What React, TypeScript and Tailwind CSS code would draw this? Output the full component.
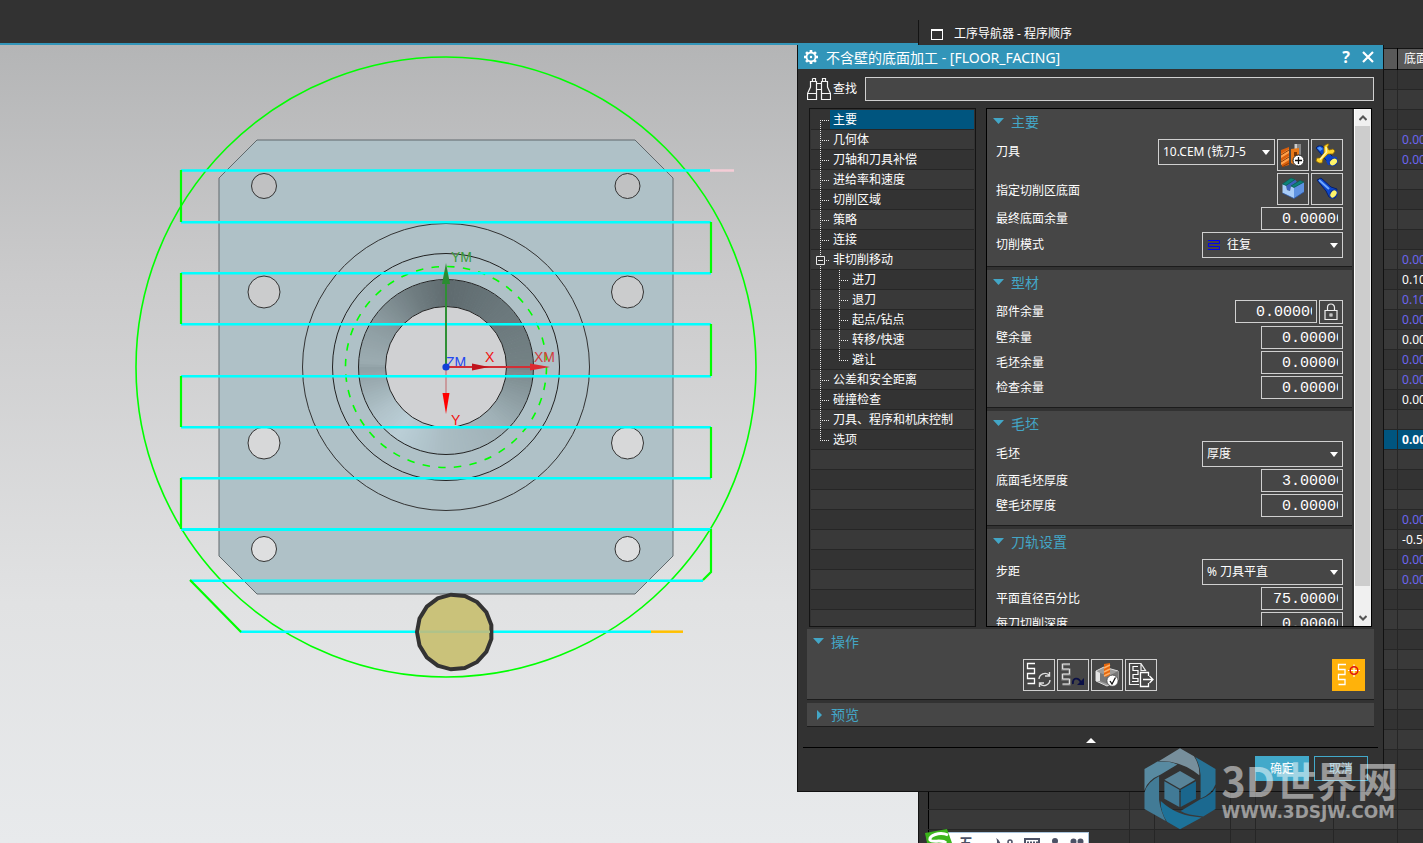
import { useState } from "react";
import type { ReactNode } from "react";
import clsx from "clsx";

type NavCell = { text: string; tone: "link" | "plain" | "active" };

const navCells: Record<number, NavCell> = {
  3: { text: "0.0000", tone: "link" },
  4: { text: "0.0000", tone: "link" },
  9: { text: "0.0000", tone: "link" },
  10: { text: "0.1000", tone: "plain" },
  11: { text: "0.1000", tone: "link" },
  12: { text: "0.0000", tone: "link" },
  13: { text: "0.0000", tone: "plain" },
  14: { text: "0.0000", tone: "link" },
  15: { text: "0.0000", tone: "link" },
  16: { text: "0.0000", tone: "plain" },
  18: { text: "0.0000", tone: "active" },
  22: { text: "0.0000", tone: "link" },
  23: { text: "-0.5000", tone: "plain" },
  24: { text: "0.0000", tone: "link" },
  25: { text: "0.0000", tone: "link" },
};

const treeItems = [
  { label: "主要" },
  { label: "几何体" },
  { label: "刀轴和刀具补偿" },
  { label: "进给率和速度" },
  { label: "切削区域" },
  { label: "策略" },
  { label: "连接" },
  { label: "非切削移动", parent: true },
  { label: "进刀", child: true },
  { label: "退刀", child: true },
  { label: "起点/钻点", child: true },
  { label: "转移/快速", child: true },
  { label: "避让", child: true, lastChild: true },
  { label: "公差和安全距离" },
  { label: "碰撞检查" },
  { label: "刀具、程序和机床控制" },
  { label: "选项" },
];

/* ---------- graphics window ---------- */

const CX = 446;
const CY = 367;

const coneStops: [number, number[]][] = [
  [0, [95, 107, 111]],
  [45, [107, 120, 124]],
  [90, [116, 130, 133]],
  [92, [124, 139, 143]],
  [135, [160, 177, 183]],
  [180, [170, 188, 195]],
  [215, [186, 207, 215]],
  [235, [176, 194, 201]],
  [268, [144, 160, 165]],
  [273, [156, 172, 177]],
  [305, [138, 153, 158]],
  [335, [112, 125, 129]],
  [361, [95, 107, 111]],
];

const coneColor = (deg: number) => {
  const i = coneStops.findIndex(([a]) => a > deg);
  const [a0, c0] = coneStops[i - 1];
  const [a1, c1] = coneStops[i];
  const t = (deg - a0) / (a1 - a0);
  return `rgb(${c0.map((c, k) => Math.round(c + (c1[k] - c) * t)).join(",")})`;
};

const polar = (cx: number, cy: number, r: number, deg: number) => {
  const a = ((deg - 90) * Math.PI) / 180;
  return `${(cx + r * Math.cos(a)).toFixed(2)} ${(cy + r * Math.sin(a)).toFixed(2)}`;
};

const wedges = Array.from({ length: 180 }, (_, i) => i * 2);
const cutter = Array.from({ length: 17 }, (_, i) => polar(454.5, 632, 37.5, 270 + (i * 360) / 17)).join(" ");
const passes = [222, 273, 324, 376, 427, 478];
const holes = [
  [186, 12.5],
  [292, 16],
  [443, 16],
  [549, 12.5],
];

const Scene = () => (
  <svg className="block h-full w-full" role="img" aria-label="刀轨">
    <defs>
      <linearGradient id="sky" x1="0" y1="0" x2="0" y2="1">
        <stop offset="0" stopColor="#b4b5b6" />
        <stop offset="0.3" stopColor="#cbcbcc" />
        <stop offset="0.7" stopColor="#e1e2e3" />
        <stop offset="1" stopColor="#e8eaec" />
      </linearGradient>
    </defs>
    <rect width="100%" height="100%" fill="url(#sky)" />
    <g transform="translate(0 -45)" fill="none">
      <path d="M257 140H635L673 178V556L635 594H257L219 556V178Z" fill="#afc1c7" stroke="#60696c" />
      {holes.map(([y, r]) =>
        [264, 627.5].map((x) => (
          <circle key={`${x}-${y}`} cx={x} cy={y} r={r} fill={y < 200 ? "#c0c1c2" : y < 300 ? "#cbcccd" : y < 500 ? "#d7d8d9" : "#dedfe0"} stroke="#333" />
        ))
      )}
      {wedges.map((d) => (
        <path key={d} d={`M${polar(CX, CY, 73.5, d)}A73.5 73.5 0 0 1 ${polar(CX, CY, 73.5, d + 2.5)}`} stroke={coneColor(d)} strokeWidth="27" />
      ))}
      <circle cx={CX} cy={CY} r="60.5" fill="#d0d1d3" stroke="#222" />
      <circle cx={CX} cy={CY} r="87.5" stroke="#222" />
      <circle cx={CX} cy={CY} r="113.5" stroke="#222" />
      <circle cx={CX} cy={CY} r="143.5" stroke="#333" />
      <circle cx={CX} cy={CY} r="100.5" stroke="#0f0" strokeWidth="1.6" strokeDasharray="7.5 8.3" />
      <circle cx={CX} cy={CY} r="310" stroke="#0f0" strokeWidth="1.6" />

      {/* tool path */}
      <path d="M446 367V394" stroke="#c99a9d" strokeWidth="2" />
      <g stroke="#0ff" strokeWidth="2.500">
        <path d="M181 170.500H710" />
        {passes.map((y) => (
          <path key={y} d={`M181 ${y}.300H711`} />
        ))}
        <path d="M181 529.500H711" strokeWidth="3" />
        <path d="M190 580.700H703M240 631.700H651" />
      </g>
      <path d="M710 170.500H734" stroke="#f5ccd6" strokeWidth="2.500" />
      <path d="M651 631.700H683" stroke="#ffc000" strokeWidth="2.500" />
      <path d="M181 170V222M711 222V273M181 273V324M711 324V376M181 376V427M711 427V478M181 478V529M711 529V572L703 580M190 580L241 632" stroke="#0f0" strokeWidth="2.200" />
      <polygon points={cutter} fill="#cac27a" stroke="#333" strokeWidth="4" />
      <path d="M419 631.700H490" stroke="#b0c289" strokeWidth="2.500" />

      {/* triad */}
      <g className="font-['Liberation_Sans'] text-[14px]">
        <text x="451" y="262" fill="#3a9a3a">YM</text>
        <text x="485" y="362" fill="#f01010">X</text>
        <text x="534" y="362" fill="#d23c3c">XM</text>
        <text x="446" y="367" fill="#2347f0">ZM</text>
        <text x="451" y="425" fill="#f01010">Y</text>
      </g>
      <path d="M442.500 393H449.500L446 414Z" fill="#f00" />
      <path d="M446 367V282" stroke="#2f8f35" strokeWidth="2" />
      <path d="M442 284L446 263L450 284Z" fill="#2b8c31" />
      <path d="M446 367H532" stroke="#d22e35" strokeWidth="2" />
      <path d="M472 363.500L489 367L472 370.500Z" fill="#c0141c" />
      <path d="M530 363.500L550 367L530 370.500Z" fill="#dd2b30" />
      <circle cx="446" cy="367" r="3.600" fill="#1140d8" />
    </g>
  </svg>
);

/* ---------- icons ---------- */

const Icon = ({ children }: { children: ReactNode }) => (
  <svg viewBox="1 1 30 30" className="block h-[30px] w-[30px]" fill="none" aria-hidden="true">
    {children}
  </svg>
);

const Drill = () => (
  <>
    <path d="M4 11L12 8V26L5 28L4 20Z" fill="#d95f0c" />
    <path d="M4 15L12 10V14L4 19ZM4 22L12 17V21L4 26Z" fill="#ffa04a" />
    <path d="M4 16L12 11M4 23L12 18M5 28L12 24" stroke="#8c3a05" />
  </>
);

const NewToolIcon = () => (
  <Icon>
    <Drill />
    <path d="M17 5H24V16H17Z" fill="#888" />
    <path d="M18 5H20V16H18Z" fill="#ccc" />
    <path d="M14 10L22 9V18L18 20V26L14 24Z" fill="#e87817" />
    <path d="M17 13H20V17H17Z" fill="#7a3503" />
    <circle cx="21.500" cy="21.500" r="5.500" fill="#fff" stroke="#222" />
    <path d="M21.500 18V25M18 21.500H25" stroke="#111" strokeWidth="1.300" />
  </Icon>
);

const EditToolIcon = () => (
  <Icon>
    <path d="M5 9L7 7L11 7L22 18L19 25L15 21Z" fill="#0b46c8" stroke="#06206d" />
    <path d="M6 9L9 7.500L12 10L9 12Z" fill="#4f97ff" />
    <path d="M19 17L26 18L24 26L17 26L15 22Z" fill="#0d42c4" />
    <ellipse cx="22.500" cy="23" rx="4.500" ry="3.300" transform="rotate(-40 22.500 23)" fill="#fdf36a" stroke="#0a2f9a" />
    <path d="M13 7L16 5L18 5L16.500 8L18 11L22 10L24 12L22 15L17 15L12 20L11 24L8 24L5 22L6 19L9 19L13 14Z" fill="#ffd42a" stroke="#8b6400" strokeWidth=".8" />
    <path d="M15 8L15.500 13L9 20.500" stroke="#fff6ad" strokeWidth="1.500" />
  </Icon>
);

const FloorIcon = () => (
  <Icon>
    <path d="M9 12.500L18 6.500L20 9L14 13L13 18L10 17Z" fill="#3c62bd" />
    <path d="M5.500 11V20L17 25.500V14.500L14 13L13 18L10 17L9 12.500Z" fill="#a9cdf8" />
    <path d="M17 14.500L27 9V19L17 25.500Z" fill="#5f93e2" />
    <path d="M5.500 11L14 5L18 6.500L9 12.500ZM14 13L23 7.500L27 9L17 14.500Z" fill="#0c8279" stroke="#055a53" strokeWidth=".6" />
    <path d="M5.500 20L17 25.500L27 19" stroke="#2b55a5" strokeWidth=".8" />
  </Icon>
);

const TorchIcon = () => (
  <Icon>
    <path d="M6 7L10 5L20 14L26 16L24 25L18 24L15 18Z" fill="#0c46cc" stroke="#061f6b" />
    <path d="M8 7L18 16" stroke="#6fa8ff" strokeWidth="2" />
    <ellipse cx="22.500" cy="21" rx="4.500" ry="3.300" transform="rotate(-55 22.500 21)" fill="#fdf36a" stroke="#0a2f9a" strokeWidth="1.200" />
  </Icon>
);

const serpentine = "M12 4.500H4.500V9.500H11.500V14.500H4.500V19.500H11.500V24.500H4.500";

const GenerateIcon = () => (
  <Icon>
    <path d={serpentine} stroke="#fff" strokeWidth="1.300" />
    <path d="M16 20A6 6 0 0 1 26 16M27 21A6 6 0 0 1 17 25M26.500 13V17H22M16.500 28V24H21" stroke="#ddd" strokeWidth="1.400" />
  </Icon>
);

const ReplayIcon = () => (
  <Icon>
    <path d={serpentine} transform="translate(1 1)" stroke="#8a8a8a" strokeWidth="2.200" />
    <path d={serpentine} transform="translate(1 .5)" stroke="#ddd" />
    <path d="M16 25C15 18 22 18 24 24" stroke="#0a0f45" strokeWidth="1.800" />
    <path d="M27 19V26H20Z" fill="#0a0f45" />
  </Icon>
);

const VerifyIcon = () => (
  <Icon>
    <path d="M5 12L13 8L27 12V21L16 27L5 22Z" fill="#9b9b9b" stroke="#ddd" />
    <path d="M5 12L9 14V22L5 22Z" fill="#e5e5e5" />
    <path d="M9 14L18 17L27 12V20L17 25L9 22Z" fill="#777" />
    <path d="M13 5L19 4V16L15 18L13 16Z" fill="#e5670e" />
    <path d="M13 9L19 6M13 13L19 10M13 17L19 14" stroke="#ffb066" strokeWidth="1.500" />
    <circle cx="21.500" cy="21.700" r="5.600" fill="#fff" stroke="#444" strokeWidth=".8" />
    <path d="M19 22L21 25L24.500 18.500" stroke="#111" strokeWidth="1.300" />
  </Icon>
);

const PostIcon = () => (
  <Icon>
    <path d="M14 25.500H4.500V4.500H16L20.500 11.500H16V5" stroke="#eee" strokeWidth="1.200" />
    <path d="M13 7.500H8V11.500H13V15.500H8V19.500H13V22.500H7" stroke="#fff" strokeWidth="1.200" />
    <path d="M23.500 17V13.500H15.500V27.500H23.500V24M18 20.500H27.500M24.500 17L28 20.500L24.500 24" stroke="#fff" strokeWidth="1.300" />
  </Icon>
);

const ShowPathIcon = () => (
  <Icon>
    <path d="M14 5.500H6.500V10.500H13V15.500H6.500V20.500H13V25.500H6.500" stroke="#fff" strokeWidth="1.300" />
    <path d="M22 5.500V18M16 11.500H28" stroke="#fff" strokeWidth="1.200" />
    <circle cx="22" cy="11.500" r="3.800" stroke="#e01010" strokeWidth="1.500" />
  </Icon>
);

const LockIcon = () => (
  <svg viewBox="0 0 22 22" className="block h-[22px] w-[22px]" fill="none" aria-hidden="true">
    <path d="M5 9.500H17V18.500H5ZM7.500 9V6.500A3.500 3.500 0 0 1 14.500 6.500V9" stroke="#eee" strokeWidth="1.200" />
    <rect x="10" y="13" width="2" height="2" stroke="#eee" />
  </svg>
);

const Binoculars = () => (
  <svg viewBox="0 0 24 24" className="h-6 w-6" fill="none" stroke="#f4f4f4" strokeWidth="1.200" aria-hidden="true">
    <path d="M5.500 1.500H8.500V4.500M5.500 1.500V4.500H3.500V10L.500 16.500V22.500H9.500V16.500H.500M9.500 16.500V4.500H5.500M9.500 6.500H14.500M9.500 12.500H14.500M14.500 16.500V4.500H18.500M15.500 4.500V1.500H18.500V4.500H20.500V10L23.500 16.500V22.500H14.500V16.500H23.500" />
  </svg>
);

const Gear = () => (
  <svg viewBox="0 0 16 16" className="h-4 w-4" aria-hidden="true">
    <g fill="#fff">
      {[0, 45, 90, 135, 180, 225, 270, 315].map((a) => (
        <rect key={a} x="6.700" y="1" width="2.600" height="3" transform={`rotate(${a} 8 8)`} />
      ))}
    </g>
    <circle cx="8" cy="8" r="4.500" fill="none" stroke="#fff" strokeWidth="1.800" />
    <circle cx="8" cy="8" r="1.200" fill="#fff" />
  </svg>
);

/* ---------- controls ---------- */

const IconButton = ({ label, children }: { label: string; children: ReactNode }) => (
  <button type="button" aria-label={label} className="h-8 w-8 shrink-0 border border-[#d0d0d0]">
    {children}
  </button>
);

const Caret = () => (
  <svg viewBox="0 0 8 5" className="pointer-events-none absolute top-1/2 right-[5px] -mt-0.5 h-[5px] w-2" aria-hidden="true">
    <path d="M0 0H8L4 5Z" fill="#fff" />
  </svg>
);

type SelectProps = { id: string; value: string; wide?: boolean; icon?: boolean };

const Select = ({ id, value, wide = true, icon }: SelectProps) => (
  <div className={clsx("relative h-[26px]", wide ? "w-[141px]" : "w-[117px]")}>
    <select
      id={id}
      className={clsx("h-full w-full appearance-none border border-[#d0d0d0] bg-[#464646] pr-4 text-white outline-none", icon ? "pl-6" : "pl-1")}
    >
      <option>{value}</option>
    </select>
    {icon && (
      <svg viewBox="0 0 12 10" className="pointer-events-none absolute top-2 left-1.5 h-2.5 w-3" aria-hidden="true">
        <path d="M0 .500H11.500V3.500H.500V6.500H11.500V9.500H0" fill="none" stroke="#0000f0" />
      </svg>
    )}
    <Caret />
  </div>
);

const NumberBox = ({ id, value }: { id: string; value: string }) => (
  <input
    id={id}
    defaultValue={value}
    className={clsx(
      "h-[23px] w-[82px] border border-[#d0d0d0] bg-transparent pt-0.5 pr-1 font-['Liberation_Mono',monospace] text-[15px] text-white outline-none",
      value.length > 7 ? "pl-[11px]" : "pl-5"
    )}
  />
);

const Row = ({ id, label, tall, children }: { id: string; label: string; tall?: boolean; children: ReactNode }) => (
  <div className="flex items-start justify-between">
    <label htmlFor={id} className={tall ? "leading-[26px]" : "leading-[23px]"}>
      {label}
    </label>
    <div className="flex gap-0.5">{children}</div>
  </div>
);

const Group = ({ title, children }: { title: string; children: ReactNode }) => (
  <section className="mb-[3px] border-b border-[#1c1c1c] bg-[#464646] pr-[9px] pb-2 pl-[9px]">
    <h2 className="-ml-[3px] flex h-[30px] items-center gap-[7px] pb-1.5 text-[14px] text-[#43a6c6]">
      <svg viewBox="0 0 11 6" className="h-1.5 w-[11px]" aria-hidden="true">
        <path d="M0 0H11L5.500 6Z" fill="#43a6c6" />
      </svg>
      {title}
    </h2>
    <div className="flex flex-col gap-0.5">{children}</div>
  </section>
);

type Item = (typeof treeItems)[number];

const TreeLines = ({ item, first, last }: { item: Item; first: boolean; last: boolean }) => (
  <svg className={clsx("h-5 shrink-0", item.child ? "w-[38px]" : "w-[19px]")} fill="none" stroke="#e8e8e8" strokeDasharray="1 1" aria-hidden="true">
    <path d={first ? "M9.500 10V20" : last ? "M9.500 0V10" : "M9.500 0V20"} />
    {item.child ? (
      <path d={item.lastChild ? "M28.500 0V10M28 10.500H38" : "M28.500 0V20M28 10.500H38"} />
    ) : (
      <path d="M9 10.500H19" />
    )}
    {item.parent && <path d="M5.500 6.500H13.500V14.500H5.500ZM7 10.500H12" fill="#343434" strokeDasharray="none" />}
  </svg>
);

const Tree = () => {
  const [active, setActive] = useState(0);
  return (
    <ul className="w-[167px] shrink-0 overflow-hidden border border-[#141414] px-px pt-px">
      {Array.from({ length: 26 }, (_, i) => {
        const item = treeItems[i];
        return (
          <li key={i} className={clsx("flex h-5 border-b border-[#262626]", i % 2 ? "bg-[#393939]" : "bg-[#333333]")}>
            {item && (
              <>
                <TreeLines item={item} first={i === 0} last={i === treeItems.length - 1} />
                <button
                  type="button"
                  onClick={() => setActive(i)}
                  className={clsx("flex-1 pl-[3px] text-left leading-[19px] whitespace-nowrap", i === active && "bg-[#00557f]")}
                >
                  {item.label}
                </button>
              </>
            )}
          </li>
        );
      })}
    </ul>
  );
};

const OperationDialog = () => (
  <div
    role="dialog"
    aria-label="不含壁的底面加工"
    className="absolute top-[45px] right-[39px] flex h-[747px] w-[587px] flex-col border-x border-b border-[#111] bg-[#323232]"
  >
    <div className="flex h-6 shrink-0 items-center bg-[#3295b9] pr-[9px] pl-[5px] text-[14px]">
      <Gear />
      <h1 className="ml-[7px] flex-1 font-['Noto_Sans','Noto_Sans_CJK_SC',sans-serif]">不含壁的底面加工 - [FLOOR_FACING]</h1>
      <button type="button" aria-label="帮助" className="w-5 text-[16px] font-bold">
        ?
      </button>
      <button type="button" aria-label="关闭" className="ml-1.5 h-3 w-3">
        <svg viewBox="0 0 12 12" className="h-3 w-3">
          <path d="M1 1L11 11M11 1L1 11" stroke="#fff" strokeWidth="2.200" />
        </svg>
      </button>
    </div>

    <div className="flex h-[39px] shrink-0 items-center pr-[9px] pl-[9px]">
      <Binoculars />
      <label htmlFor="find" className="ml-0.5">
        查找
      </label>
      <input id="find" className="ml-2 h-6 flex-1 border border-[#d0d0d0] bg-[#464646] px-1 outline-none" />
    </div>

    <div className="flex h-[519px] shrink-0 gap-2.5 pr-[11px] pl-[11px]">
      <Tree />
      <div className="flex flex-1 border border-black">
        <div className="flex-1 overflow-hidden">
          <Group title="主要">
            <Row id="tool" label="刀具" tall>
              <Select id="tool" value="10.CEM (铣刀-5" wide={false} />
              <IconButton label="新建刀具">
                <NewToolIcon />
              </IconButton>
              <IconButton label="编辑刀具">
                <EditToolIcon />
              </IconButton>
            </Row>
            <div className="flex items-end justify-between">
              <span className="leading-7">指定切削区底面</span>
              <div className="flex gap-0.5">
                <IconButton label="指定底面">
                  <FloorIcon />
                </IconButton>
                <IconButton label="显示">
                  <TorchIcon />
                </IconButton>
              </div>
            </div>
            <Row id="final" label="最终底面余量">
              <NumberBox id="final" value="0.00000" />
            </Row>
            <Row id="mode" label="切削模式" tall>
              <Select id="mode" value="往复" icon />
            </Row>
          </Group>
          <Group title="型材">
            <Row id="part" label="部件余量">
              <NumberBox id="part" value="0.00000" />
              <button type="button" aria-label="锁定" className="h-6 w-6 border border-[#d0d0d0]">
                <LockIcon />
              </button>
            </Row>
            <Row id="wall" label="壁余量">
              <NumberBox id="wall" value="0.00000" />
            </Row>
            <Row id="blankstock" label="毛坯余量">
              <NumberBox id="blankstock" value="0.00000" />
            </Row>
            <Row id="check" label="检查余量">
              <NumberBox id="check" value="0.00000" />
            </Row>
          </Group>
          <Group title="毛坯">
            <Row id="blank" label="毛坯" tall>
              <Select id="blank" value="厚度" />
            </Row>
            <Row id="floorblank" label="底面毛坯厚度">
              <NumberBox id="floorblank" value="3.00000" />
            </Row>
            <Row id="wallblank" label="壁毛坯厚度">
              <NumberBox id="wallblank" value="0.00000" />
            </Row>
          </Group>
          <Group title="刀轨设置">
            <Row id="step" label="步距" tall>
              <Select id="step" value="% 刀具平直" />
            </Row>
            <Row id="percent" label="平面直径百分比">
              <NumberBox id="percent" value="75.00000" />
            </Row>
            <Row id="depth" label="每刀切削深度">
              <NumberBox id="depth" value="0.00000" />
            </Row>
          </Group>
        </div>
        <div className="ml-0.5 flex w-[17px] flex-col border-l border-white bg-[#f0f0f0]">
          <button type="button" aria-label="向上滚动" className="flex h-[17px] items-center justify-center">
            <svg viewBox="0 0 8 6" className="h-1.5 w-2">
              <path d="M.500 5L4 1.500L7.500 5" fill="none" stroke="#555" strokeWidth="2" />
            </svg>
          </button>
          <div className="mr-px flex-1 bg-[#cdcdcd]" />
          <button type="button" aria-label="向下滚动" className="flex h-10 items-end justify-center pb-[5px]">
            <svg viewBox="0 0 8 6" className="h-1.5 w-2">
              <path d="M.500 1L4 4.500L7.500 1" fill="none" stroke="#555" strokeWidth="2" />
            </svg>
          </button>
        </div>
      </div>
    </div>

    <div className="mt-0.5 flex flex-col gap-[3px] pr-[9px] pl-[9px] text-[14px] text-[#43a6c6]">
      <section className="h-[71px] border-b border-[#1c1c1c] bg-[#464646] px-1.5">
        <h2 className="flex h-[30px] items-center gap-[7px] pb-1.5">
          <svg viewBox="0 0 11 6" className="h-1.5 w-[11px]" aria-hidden="true">
            <path d="M0 0H11L5.500 6Z" fill="#43a6c6" />
          </svg>
          操作
        </h2>
        <div className="flex items-start">
          <div className="flex flex-1 justify-center gap-0.5 pl-[34px]">
            <IconButton label="生成">
              <GenerateIcon />
            </IconButton>
            <IconButton label="重播">
              <ReplayIcon />
            </IconButton>
            <IconButton label="确认">
              <VerifyIcon />
            </IconButton>
            <IconButton label="后处理">
              <PostIcon />
            </IconButton>
          </div>
          <button type="button" aria-label="显示刀轨" className="mr-[3px] h-8 w-[33px] border border-[#ffb20a] bg-[#ffb20a]">
            <ShowPathIcon />
          </button>
        </div>
      </section>
      <section className="h-6 border-b border-[#1c1c1c] bg-[#464646] px-1.5">
        <h2 className="flex h-full items-center gap-[7px]">
          <svg viewBox="0 0 11 12" className="h-3 w-[11px]" aria-hidden="true">
            <path d="M4 1V11L9 6Z" fill="#43a6c6" />
          </svg>
          预览
        </h2>
      </section>
    </div>

    <div className="mx-[5px] flex h-[21px] shrink-0 items-center justify-center border-b border-black pt-[7px]">
      <svg viewBox="0 0 10 5" className="h-[5px] w-2.5" aria-hidden="true">
        <path d="M0 5H10L5 0Z" fill="#fff" />
      </svg>
    </div>
    <div className="flex gap-[5px] self-end pt-2 pr-[15px]">
      <button type="button" className="h-[25px] w-[54px] bg-[#42a9ca]">
        确定
      </button>
      <button type="button" className="h-[25px] w-[54px] border border-[#42a9ca] text-[#7fbfd6]">
        取消
      </button>
    </div>
  </div>
);

/* ---------- operation navigator ---------- */

const Navigator = () => (
  <aside className="flex w-[505px] shrink-0 flex-col">
    <div className="mt-5 flex h-7 shrink-0 items-center border-l border-[#141414] pl-3">
      <span className="h-[11px] w-3 border border-t-2 border-white" />
      <h2 className="ml-[11px]">工序导航器 - 程序顺序</h2>
    </div>
    <div className="flex-1 overflow-hidden border-l border-[#141414] pl-[9px]">
      <table className="w-full table-fixed border-collapse border-l border-black">
        <colgroup>
          <col className="w-[201px]" />
          <col className="w-[25px]" />
          <col className="w-[76px]" />
          <col className="w-[25px]" />
          <col className="w-[78px]" />
          <col className="w-[64px]" />
          <col />
        </colgroup>
        <thead>
          <tr className="h-[21px] border-y border-[#141414] bg-[#595959]">
            <th colSpan={6} />
            <th className="overflow-hidden border-l border-black p-0 pl-1.5 text-left font-normal whitespace-nowrap">底面余量</th>
          </tr>
        </thead>
        <tbody>
          {Array.from({ length: 39 }, (_, i) => {
            const cell = navCells[i];
            return (
              <tr
                key={i}
                className={clsx(
                  "h-5 border-b border-[#262626]",
                  cell?.tone === "active" ? "bg-[#00557f]" : i % 2 ? "bg-[#393939]" : "bg-[#333333]"
                )}
              >
                {[0, 1, 2, 3, 4, 5].map((c) => (
                  <td key={c} className="border-r border-[#262626] p-0" />
                ))}
                <td
                  className={clsx(
                    "overflow-hidden border-l border-black p-0 pl-1 leading-[19px] whitespace-nowrap",
                    cell?.tone === "link" && "text-[#6c66f0]",
                    cell?.tone === "active" && "font-bold"
                  )}
                >
                  {cell?.text}
                </td>
              </tr>
            );
          })}
        </tbody>
      </table>
    </div>
  </aside>
);

const InputMethodBar = () => (
  <div className="absolute right-[334px] bottom-0 flex h-[11px] w-[164px]">
    <div className="ml-3 flex flex-1 items-start justify-between overflow-hidden border border-b-0 border-[#a9c4dc] bg-white pr-1 pl-[21px] text-[#4c5266]">
      <span className="mt-[3px] text-[14px] leading-[14px] font-bold">五</span>
      <svg viewBox="0 0 12 10" className="mt-[5px] ml-2 h-2.5 w-3" fill="currentColor" aria-hidden="true">
        <path d="M4 0A7 7 0 0 1 1 10H8A8 8 0 0 0 4 0Z" />
      </svg>
      <svg viewBox="0 0 6 6" className="mt-1.5 -ml-2 h-1.5 w-1.5" fill="none" stroke="currentColor" strokeWidth="1.500" aria-hidden="true">
        <circle cx="3" cy="3" r="2" />
      </svg>
      <svg viewBox="0 0 16 10" className="mt-[5px] h-2.5 w-4" fill="none" stroke="currentColor" strokeWidth="2" aria-hidden="true">
        <path d="M1 10V1H15V10" />
        <path d="M3 4.500H14" strokeDasharray="2 1" />
      </svg>
      <svg viewBox="0 0 8 10" className="mt-[5px] h-2.5 w-2" fill="currentColor" aria-hidden="true">
        <circle cx="4" cy="3" r="3" />
        <path d="M0 10Q4 4 8 10Z" />
      </svg>
      <svg viewBox="0 0 14 10" className="mt-[5px] h-2.5 w-3.5" fill="currentColor" aria-hidden="true">
        <circle cx="3.500" cy="3.500" r="3" />
        <circle cx="10.500" cy="3.500" r="3" />
      </svg>
    </div>
    <svg viewBox="0 0 28 14" className="absolute bottom-0 left-0 h-3.5 w-7" aria-hidden="true">
      <path d="M0 4L22 0L27 14H2Z" fill="#3cb51c" />
      <path d="M23 6C14 2 4 7 5 11C7 14 18 10 21 14" fill="none" stroke="#fff" strokeWidth="3" />
    </svg>
  </div>
);

const Watermark = () => (
  <div className="pointer-events-none absolute right-[25px] bottom-[13px] flex items-center gap-1.5">
    <svg viewBox="30 23 216 247" className="h-[82px] w-[72px]" aria-hidden="true">
      <path d="M75 62L138 24L180 48Q198 75 196 105Q140 60 75 62Z" fill="#778f9c" />
      <path d="M184 50L245 86V132Q235 160 200 175V104Q198 75 184 50Z" fill="#277295" />
      <path d="M245 142V207L208 229Q160 226 140 213L198 178Q235 165 245 142Z" fill="#1b6990" />
      <path d="M80 183Q130 230 203 232L138 268L99 245Q78 215 80 183Z" fill="#1d7299" />
      <path d="M75 108V180Q80 215 95 243L31 207V157Q40 125 75 108Z" fill="#427b96" />
      <path d="M31 86L70 64Q110 62 130 73L80 103Q40 120 31 150Z" fill="#588aa1" />
      <path d="M138 92L184 119L138 146L91 119Z" fill="#588398" />
      <path d="M91 123L136 149V201L91 176Z" fill="#417a96" />
      <path d="M140 149L186 123V176L140 201Z" fill="#1a668d" />
    </svg>
    <div className="text-white/50">
      <div className="font-['Noto_Sans_CJK_SC',sans-serif] text-[41px] leading-[46px] font-bold whitespace-nowrap">3D世界网</div>
      <div className="font-['DejaVu_Sans',sans-serif] text-[17px] leading-5 font-bold">WWW.3DSJW.COM</div>
    </div>
  </div>
);

const App = () => (
  <div className="relative flex h-screen w-full overflow-hidden bg-[#323232] font-['Noto_Sans','Noto_Sans_CJK_SC',sans-serif] text-[12px] text-white">
    <main className="flex min-w-0 flex-1 flex-col">
      <div className="h-[45px] shrink-0 border-b-2 border-[#3295b9]" />
      <div className="min-h-0 flex-1">
        <Scene />
      </div>
    </main>
    <Navigator />
    <OperationDialog />
    <Watermark />
    <InputMethodBar />
  </div>
);

export default App;
